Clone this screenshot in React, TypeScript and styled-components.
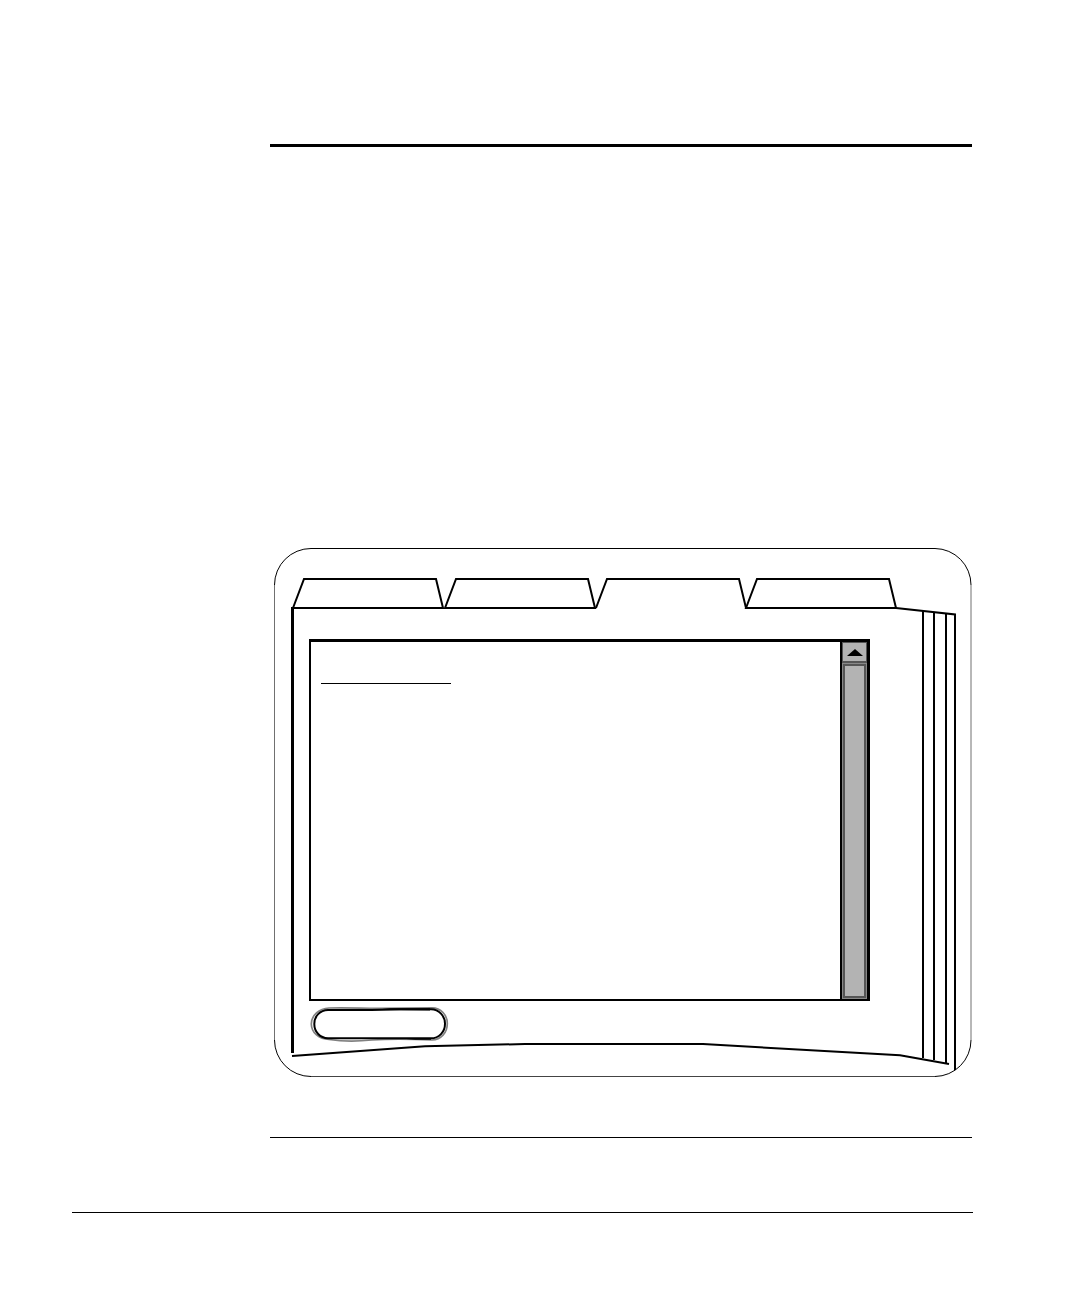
import React from "react";
import styled, { createGlobalStyle } from "styled-components";

const GlobalStyle = createGlobalStyle`
  * { box-sizing: border-box; }
  body {
    margin: 0;
    background: #fff;
    color: #000;
    font-family: "Liberation Sans", Arial, sans-serif;
  }
`;

const Page = styled.div`
  display: flex;
  flex-direction: column;
  padding: 144px 107px 83px 72px;
`;

const Article = styled.main`
  display: flex;
  flex-direction: column;
  margin: 0 1px 74px 198px;
`;

const Rule = styled.hr<{ $weight: number }>`
  width: 100%;
  height: ${(p) => p.$weight}px;
  margin: 0;
  border: 0;
  background: #000;
`;

const Figure = styled.section`
  position: relative;
  display: flex;
  flex-direction: column;
  align-items: flex-start;
  width: 698px;
  min-height: 530px;
  margin: 401px 0 59px 4px;
  padding: 30px 0 0 18px;
`;

const Outline = styled.svg`
  position: absolute;
  inset: 0;
  width: 698px;
  height: 530px;
  overflow: visible;
  pointer-events: none;
  fill: none;
  stroke: #000;
  stroke-width: 2px;
`;

const FrameLine = styled.path<{ $color: string }>`
  stroke: ${(p) => p.$color};
  stroke-width: 1px;
`;

const Spine = styled.path`
  stroke-width: 3px;
`;

const TabStrip = styled.nav`
  display: flex;
  height: 31px;
`;

const Tab = styled.button<{ $width: number }>`
  width: ${(p) => p.$width}px;
  height: 31px;
  padding: 0;
  border: 0;
  background: none;
`;

const TabShape = styled.svg`
  display: block;
  width: 152px;
  height: 31px;
  overflow: visible;
  fill: none;
  stroke: #000;
  stroke-width: 2px;
`;

const Viewer = styled.div`
  display: flex;
  width: 561px;
  height: 362px;
  margin: 30px 0 0 17px;
  border: 2px solid #000;
  border-top-width: 3px;
`;

const Content = styled.div`
  flex: 1;
  padding: 41px 9px 0 10px;
`;

const HeadingLine = styled.hr`
  width: 130px;
  height: 1px;
  margin: 0;
  border: 0;
  background: #000;
`;

const ScrollBar = styled.div`
  display: flex;
  flex-direction: column;
  width: 28px;
  border: solid #000;
  border-width: 0 1px 0 2px;
`;

const ScrollUp = styled.button`
  display: flex;
  align-items: center;
  justify-content: center;
  height: 21px;
  padding: 0;
  border: solid #555;
  border-width: 1px 1px 2px;
  background: #b3b3b3;
`;

const ScrollThumb = styled.div`
  flex: 1;
  border: 1px solid #888;
  box-shadow: inset 0 0 0 2px #555;
  background: #b3b3b3;
`;

const PillButton = styled.button`
  width: 139px;
  height: 36px;
  margin: 5px 0 0 18px;
  padding: 0;
  border: 0;
  background: none;
`;

const PillShape = styled.svg`
  display: block;
  width: 139px;
  height: 36px;
  overflow: visible;
  fill: none;
`;

const tabs = [
  { width: 152, selected: false },
  { width: 151, selected: false },
  { width: 150, selected: true },
  { width: 151, selected: false },
];

export default function App() {
  return (
    <>
      <GlobalStyle />
      <Page>
        <Article>
          <Rule $weight={3} />
          <Figure>
            <Outline viewBox="0 0 698 530" aria-hidden="true">
              <FrameLine
                $color="#000"
                d="M0.5 37A36.500 36.500 0 0 1 37 0.5H661A36.500 36.500 0 0 1 697 37M697 492A36.500 36.500 0 0 1 661 528.500M37 528.500A36.500 36.500 0 0 1 0.5 492"
              />
              <FrameLine $color="#707070" d="M0.5 37V492M697 37V492" />
              <FrameLine $color="#444" d="M37 528.500H661" />
              <path d="M622 60L681 66.500V522" />
              <path d="M649 63V510M660 64V512M672 65V515" />
              <Spine d="M18.500 59V505" />
              <path d="M18 508L151 498.300L251 496H429L626 507.300L675 516" />
            </Outline>
            <TabStrip>
              {tabs.map((tab, i) => (
                <Tab key={i} $width={tab.width} aria-pressed={tab.selected}>
                  <TabShape viewBox="0 0 152 31">
                    <path d={"M1 30L12 1H144L151 30" + (tab.selected ? "" : "Z")} />
                  </TabShape>
                </Tab>
              ))}
            </TabStrip>
            <Viewer>
              <Content>
                <HeadingLine />
              </Content>
              <ScrollBar>
                <ScrollUp>
                  <svg width="16" height="7" viewBox="0 0 16 7">
                    <path d="M0 7L8 0L16 7Z" />
                  </svg>
                </ScrollUp>
                <ScrollThumb />
              </ScrollBar>
            </Viewer>
            <PillButton>
              <PillShape viewBox="0 0 139 36">
                <path
                  stroke="#808080"
                  strokeWidth="1.700"
                  d="M19 2C40 1.500 55 2.500 70 2.300L122 1.800C131 2 137.300 9 137.300 17.500C137.300 27 131 33.500 122 34C98 33 78 33 62 34C48 35.500 32 35.500 19 33.500C9 33 1.500 27 1.300 18C1.500 9 9 2.500 19 2Z"
                />
                <path
                  stroke="#000"
                  strokeWidth="2"
                  d="M18 4H62L90 3.200H121C129 3.200 135 10 135 17.700C135 26 129 32.300 121 32.300H18C10 32 4.300 26 4.300 18C4.300 10 10 4.300 18 4Z"
                />
                <path fill="#000" d="M62 4L80 2.300H120V4.500ZM85 32L105 33.700H121V32Z" />
              </PillShape>
            </PillButton>
          </Figure>
          <Rule $weight={1} />
        </Article>
        <Rule as="hr" $weight={1} />
      </Page>
    </>
  );
}
